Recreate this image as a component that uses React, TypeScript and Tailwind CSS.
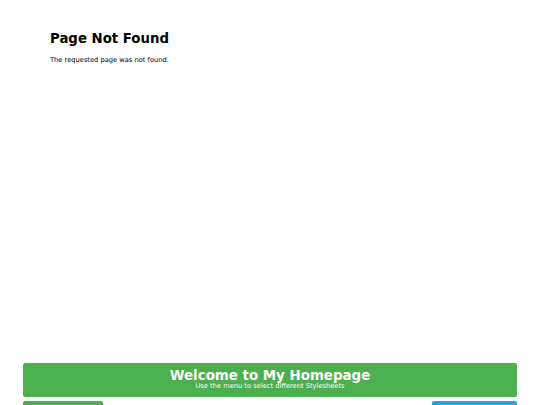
export default function App() {
  return (
    <div
      className="flex h-[405px] w-[540px] flex-col overflow-hidden bg-white text-black"
      style={{ fontFamily: '"DejaVu Sans", Verdana, sans-serif' }}
    >
      <main className="flex-1 pl-[50px] pt-[31px]">
        <h1 className="text-[13.3px] font-bold leading-[16px]">Page Not Found</h1>
        <p className="mt-[9px] text-[6.7px] leading-[8px]">The requested page was not found.</p>
      </main>

      <header className="mx-[23px] flex h-[34px] flex-col items-center rounded-[2px] bg-[#4caf50] pt-[6px] text-white">
        <h2 className="text-[13.4px] font-bold leading-[13px]">Welcome to My Homepage</h2>
        <p className="text-[6.7px] leading-[8px]">Use the menu to select different Stylesheets</p>
      </header>

      <div className="mx-[23px] mt-[4px] flex h-[4px] shrink-0 justify-between">
        <div className="h-[20px] w-[80px] rounded-t-[2px] bg-[#4caf50]" />
        <div className="h-[20px] w-[85px] rounded-t-[2px] bg-[#2f9fe0]" />
      </div>
    </div>
  );
}
